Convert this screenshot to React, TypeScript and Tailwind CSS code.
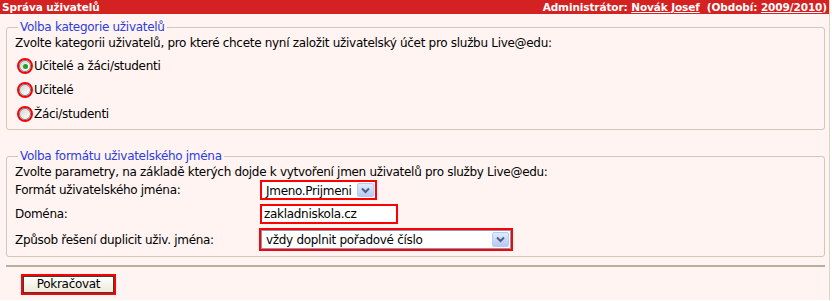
const Radio = ({ checked, label }: { checked?: boolean; label: string }) => (
  <label className="flex h-[24px] items-center">
    <span className="ml-[2px] mr-[1px] flex h-[16px] w-[16px] items-center justify-center rounded-full border-2 border-[#ff0000]">
      <span className="flex h-[12px] w-[12px] items-center justify-center rounded-full border border-[#6b7d8e] bg-gradient-to-br from-[#d6d6d0] to-[#ffffff]">
        {checked && <span className="h-[5px] w-[5px] rounded-full bg-[#21a121]" />}
      </span>
    </span>
    <span>{label}</span>
  </label>
);

const Arrow = () => (
  <span className="flex h-full w-[17px] items-center justify-center rounded-[2px] border border-[#b8cbf4] bg-gradient-to-b from-[#e2eafd] to-[#b7c9f3]">
    <svg width="9" height="7" viewBox="0 0 9 7">
      <path d="M1 1.5 L4.5 5 L8 1.5" fill="none" stroke="#4d6185" strokeWidth="2" />
    </svg>
  </span>
);

const App = () => {
  return (
    <div className="h-[301px] w-[832px] bg-white text-[12px] leading-[16px] tracking-[-0.3px] text-black [font-family:'DejaVu_Sans',Verdana,sans-serif]">
      <div className="h-[300px] w-[830px] border-r border-[#d8d2c8] bg-[#fff4f2]">
        <div className="flex h-[14px] items-center justify-between bg-[#d42121] px-[2px] text-[10.5px] font-bold leading-[14px] tracking-[-0.1px] text-white">
          <span>Správa uživatelů</span>
          <span>
            Administrátor: <span className="underline">Novák Josef</span>&nbsp; (Období:{" "}
            <span className="underline">2009/2010</span>)
          </span>
        </div>

        <div className="px-[6px]">
          <fieldset className="mt-[6px] w-[819px] rounded-[3px] border border-[#d0c8b8] pb-[3px] pl-[8px]">
            <legend className="ml-[3px] px-[2px] leading-[14px] text-[#2b3ce0]">Volba kategorie uživatelů</legend>
            <p className="mt-[1px]">Zvolte kategorii uživatelů, pro které chcete nyní založit uživatelský účet pro službu Live@edu:</p>
            <div className="mt-[3px] flex flex-col">
              <Radio checked label="Učitelé a žáci/studenti" />
              <Radio label="Učitelé" />
              <Radio label="Žáci/studenti" />
            </div>
          </fieldset>

          <fieldset className="mt-[19px] w-[819px] rounded-[3px] border border-[#d0c8b8] pb-[5px] pl-[8px]">
            <legend className="ml-[3px] px-[2px] leading-[14px] text-[#2b3ce0]">Volba formátu uživatelského jména</legend>
            <p className="mt-[1px]">Zvolte parametry, na základě kterých dojde k vytvoření jmen uživatelů pro služby Live@edu:</p>
            <div className="grid grid-cols-[245px_1fr] items-center gap-y-[4px]">
              <span>Formát uživatelského jména:</span>
              <div className="flex h-[20px] w-[117px] border-2 border-[#ff0000] bg-white p-[1px]">
                <span className="flex-1 pl-[3px] leading-[16px]">Jmeno.Prijmeni</span>
                <Arrow />
              </div>
              <span>Doména:</span>
              <div className="h-[20px] w-[138px] border-2 border-[#ff0000] bg-white pl-[2px] leading-[16px]">zakladniskola.cz</div>
              <span>Způsob řešení duplicit uživ. jména:</span>
              <div className="-ml-[1px] flex h-[23px] w-[254px] border-2 border-[#ff0000] bg-white">
                <div className="flex flex-1 border border-[#7f9db9] p-[1px]">
                  <span className="flex-1 pl-[3px] leading-[17px]">vždy doplnit pořadové číslo</span>
                  <Arrow />
                </div>
              </div>
            </div>
          </fieldset>

          <div className="mt-[8px] h-[2px] w-[819px] bg-[#b8ae9f]" />

          <div className="mt-[7px] pl-[15px]">
            <button className="h-[21px] w-[95px] border-2 border-[#ff0000] bg-gradient-to-b from-[#ffffff] to-[#ece9d8] leading-[15px] outline outline-1 -outline-offset-3 outline-[#3c3c3c]">
              Pokračovat
            </button>
          </div>
        </div>
      </div>
    </div>
  );
};

export default App;
